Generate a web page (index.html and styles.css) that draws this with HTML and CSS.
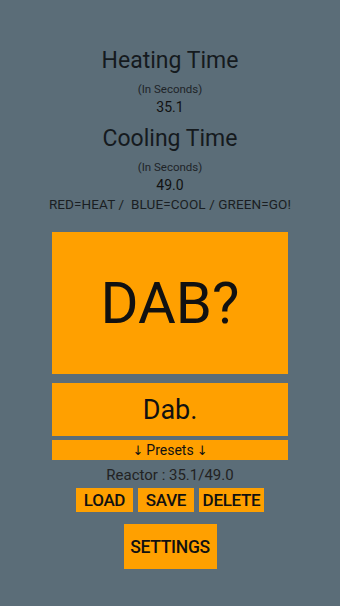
FILE: index.html
```html
<!DOCTYPE html>
<html lang="en">
<head>
    <meta charset="UTF-8">
    <meta name="viewport" content="width=device-width, initial-scale=1.0">
    <title>Dab Timer</title>
    <link rel="stylesheet" href="styles.css">
</head>
<body>
    <div class="app">
        <div class="title first">Heating Time</div>
        <div class="unit">(In Seconds)</div>
        <div class="value">35.1</div>
        <div class="title">Cooling Time</div>
        <div class="unit">(In Seconds)</div>
        <div class="value">49.0</div>
        <div class="legend">RED=HEAT / &nbsp;BLUE=COOL / GREEN=GO!</div>

        <div class="dab-button">DAB?</div>
        <div class="name-box">Dab.</div>
        <div class="presets"><span class="arrow">&#8595;</span> Presets <span class="arrow">&#8595;</span></div>
        <div class="reactor">Reactor : 35.1/49.0</div>

        <div class="actions">
            <div class="small-btn load">LOAD</div>
            <div class="small-btn save">SAVE</div>
            <div class="small-btn delete">DELETE</div>
        </div>
        <div class="settings">SETTINGS</div>
    </div>
</body>
</html>
```

FILE: styles.css
```css
body {
    margin: 0;
    background-color: #5b6d78;
    font-family: Roboto, "Noto Sans", sans-serif;
    color: #111;
}

.app {
    display: flex;
    flex-direction: column;
    align-items: center;
    height: 606px;
}

.title {
    font-size: 23px;
    line-height: 28px;
    margin-top: 10px;
    color: #151a1e;
}

.title.first {
    margin-top: 47px;
}

.unit {
    font-size: 11.5px;
    line-height: 12px;
    margin-top: 8px;
    color: #1e2428;
}

.value {
    font-size: 14px;
    line-height: 16px;
    margin-top: 4px;
}

.legend {
    font-size: 13.5px;
    line-height: 14px;
    margin-top: 4px;
    color: #1a1e22;
    letter-spacing: 0.1px;
}

.dab-button {
    width: 236px;
    height: 142px;
    margin-top: 21px;
    background-color: #ffa000;
    display: flex;
    align-items: center;
    justify-content: center;
    font-size: 58px;
}

.name-box {
    width: 236px;
    height: 53px;
    margin-top: 9px;
    background-color: #ffa000;
    display: flex;
    align-items: center;
    justify-content: center;
    font-size: 27px;
}

.presets {
    width: 236px;
    height: 20px;
    margin-top: 4px;
    background-color: #ffa000;
    display: flex;
    align-items: center;
    justify-content: center;
    gap: 3px;
    font-size: 14px;
}

.arrow {
    font-family: "DejaVu Sans", sans-serif;
    font-size: 13px;
    color: #111;
}

.reactor {
    font-size: 15px;
    line-height: 16px;
    margin-top: 7px;
    color: #222;
}

.actions {
    display: flex;
    gap: 5px;
    margin-top: 5px;
}

.small-btn {
    height: 24px;
    background-color: #ffa000;
    display: flex;
    align-items: center;
    justify-content: center;
    font-size: 17px;
    font-weight: 500;
    letter-spacing: -0.3px;
}

.load {
    width: 57px;
}

.save {
    width: 56px;
}

.delete {
    width: 65px;
}

.settings {
    width: 93px;
    height: 45px;
    margin-top: 12px;
    background-color: #ffa000;
    display: flex;
    align-items: center;
    justify-content: center;
    font-size: 17.5px;
    font-weight: 500;
    letter-spacing: -0.3px;
}
```
